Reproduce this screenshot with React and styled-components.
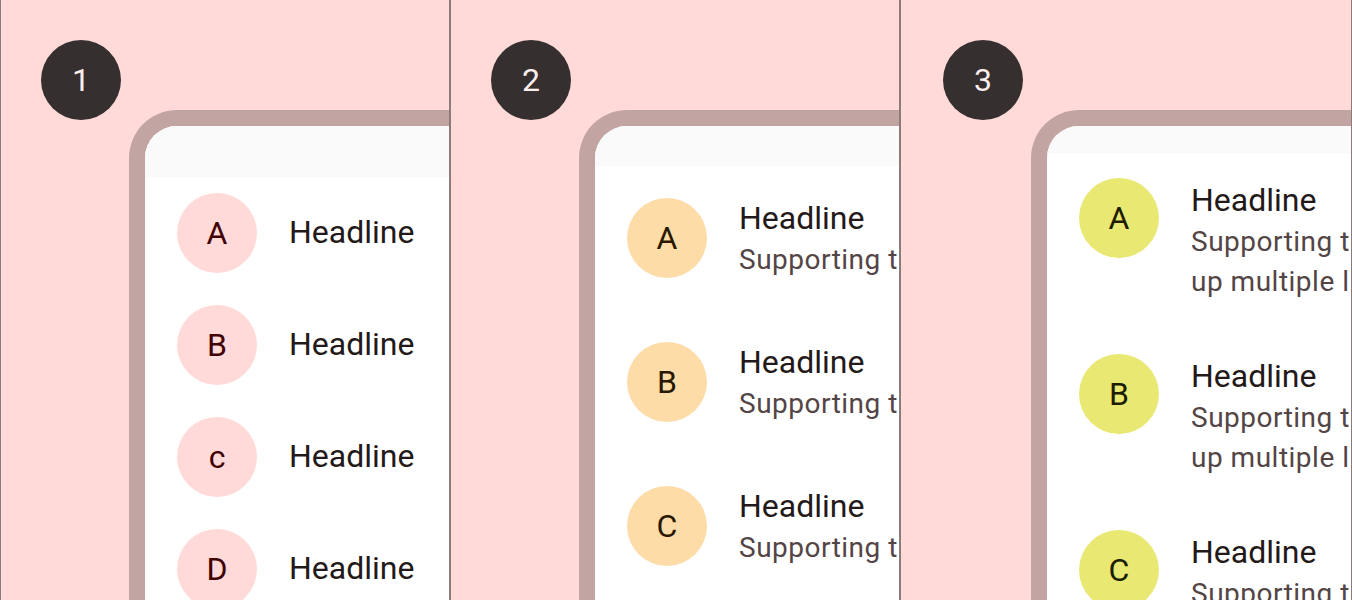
import React from "react";
import styled, { createGlobalStyle } from "styled-components";

const Global = createGlobalStyle`
  html, body { margin: 0; padding: 0; }
  body { font-family: Roboto, "Noto Sans", sans-serif; background: #ffdad8; }
`;

const Page = styled.div`
  display: flex;
  width: 1352px;
  height: 600px;
  overflow: hidden;
`;

const Panel = styled.section`
  box-sizing: border-box;
  flex: 0 0 ${(p) => p.$w}px;
  height: 600px;
  overflow: hidden;
  background: #ffdad8;
  border-left: 1px solid #8b7b7b;
  border-right: 1px solid #8b7b7b;
  padding: 40px 0 0 ${(p) => p.$inset}px;
  display: flex;
  flex-direction: column;
  align-items: flex-start;
`;

const Badge = styled.div`
  flex: 0 0 auto;
  width: 80px;
  height: 80px;
  border-radius: 50%;
  background: #362f2f;
  color: #fbeeed;
  display: flex;
  align-items: center;
  justify-content: center;
  font-size: 32px;
  line-height: 1;
`;

const Phone = styled.div`
  flex: 0 0 auto;
  margin: -10px 0 0 88px;
  width: 720px;
  height: 1000px;
  border: 16px solid #c2a5a3;
  border-right: none;
  border-bottom: none;
  border-top-left-radius: 48px;
  background: #ffffff;
  overflow: hidden;
`;

const TopBar = styled.div`
  height: ${(p) => p.$h}px;
  background: #fafafa;
`;

const List = styled.ul`
  list-style: none;
  margin: 0;
  padding: 0;
`;

const Item = styled.li`
  display: flex;
  align-items: ${(p) => (p.$top ? "flex-start" : "center")};
  gap: 32px;
  height: ${(p) => p.$h}px;
  box-sizing: border-box;
  padding: ${(p) => (p.$top ? "24px 0 0 32px" : "0 0 0 32px")};
`;

const Avatar = styled.div`
  flex: 0 0 80px;
  width: 80px;
  height: 80px;
  border-radius: 50%;
  background: ${(p) => p.$bg};
  color: ${(p) => p.$fg};
  display: flex;
  align-items: center;
  justify-content: center;
  font-size: 32px;
  font-weight: 400;
  line-height: 1;
`;

const Texts = styled.div`
  display: flex;
  flex-direction: column;
  white-space: nowrap;
  margin-top: ${(p) => (p.$single ? "-3px" : "0")};
`;

const Headline = styled.div`
  font-size: 32px;
  line-height: 44px;
  color: #231919;
`;

const Support = styled.div`
  font-size: 28px;
  line-height: 40px;
  letter-spacing: 0.5px;
  color: #534545;
`;

const themes = {
  pink: { bg: "#ffdad8", fg: "#410002" },
  orange: { bg: "#fddca8", fg: "#2a1800" },
  lime: { bg: "#e8e872", fg: "#1d1d00" },
};

const panels = [
  {
    n: 1,
    w: 450,
    inset: 40,
    bar: 51,
    h: 112,
    theme: "pink",
    items: ["A", "B", "c", "D"],
    lines: [],
  },
  {
    n: 2,
    w: 450,
    inset: 40,
    bar: 40,
    h: 144,
    theme: "orange",
    items: ["A", "B", "C"],
    lines: ["Supporting text"],
  },
  {
    n: 3,
    w: 452,
    inset: 42,
    bar: 28,
    h: 176,
    top: true,
    theme: "lime",
    items: ["A", "B", "C"],
    lines: ["Supporting text that can take", "up multiple lines"],
  },
];

export default function App() {
  return (
    <>
      <Global />
      <Page>
        {panels.map((p) => (
          <Panel key={p.n} $w={p.w} $inset={p.inset}>
            <Badge>{p.n}</Badge>
            <Phone>
              <TopBar $h={p.bar} />
              <List>
                {p.items.map((l) => (
                  <Item key={l} $h={p.h} $top={p.top}>
                    <Avatar $bg={themes[p.theme].bg} $fg={themes[p.theme].fg}>
                      {l}
                    </Avatar>
                    <Texts $single={p.lines.length === 0}>
                      <Headline>Headline</Headline>
                      {p.lines.map((t) => (
                        <Support key={t}>{t}</Support>
                      ))}
                    </Texts>
                  </Item>
                ))}
              </List>
            </Phone>
          </Panel>
        ))}
      </Page>
    </>
  );
}
